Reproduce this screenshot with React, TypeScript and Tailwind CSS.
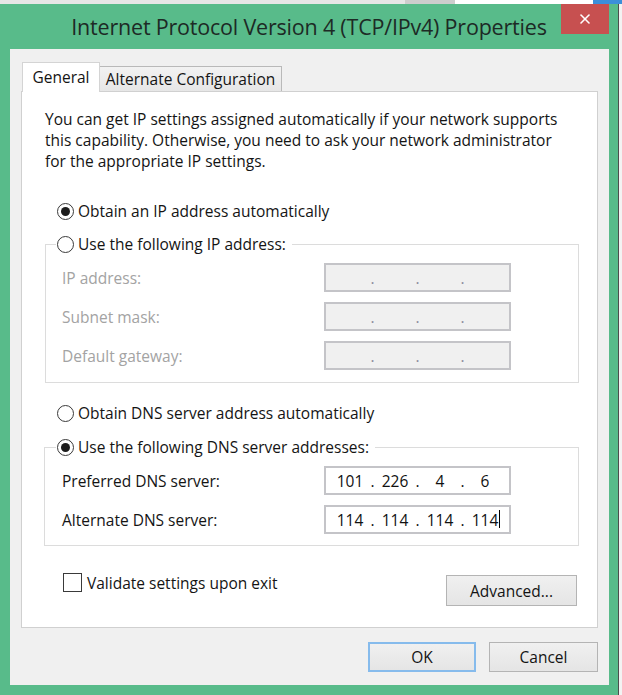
import { Fragment } from 'react'
import { X } from 'lucide-react'
import clsx from 'clsx'

function Radio({ checked }: { checked?: boolean }) {
  return (
    <span className="flex h-[17px] w-[17px] shrink-0 items-center justify-center rounded-full border border-[#3a3a3a] bg-white">
      {checked && <span className="h-[9px] w-[9px] rounded-full bg-[#1c1c1c]" />}
    </span>
  )
}

function IpField({
  parts,
  disabled,
  caret,
}: {
  parts: string[]
  disabled?: boolean
  caret?: boolean
}) {
  return (
    <div
      className={clsx(
        'flex h-[29px] w-[187px] items-center border-2 border-[#c4c4c8] pl-[6px]',
        disabled ? 'bg-[#f0f0f0] text-[#8c8c9c]' : 'bg-white text-[#111]'
      )}
    >
      {parts.map((p, i) => (
        <Fragment key={i}>
          {i > 0 && <span className="w-[9px] text-center">.</span>}
          <span className="flex w-[36px] justify-center">
            <span className="relative">
              {p}
              {caret && i === parts.length - 1 && (
                <span className="absolute -right-[2px] top-[1px] h-[18px] w-px bg-black" />
              )}
            </span>
          </span>
        </Fragment>
      ))}
    </div>
  )
}

function FieldRow({
  label,
  parts,
  disabled,
  caret,
}: {
  label: string
  parts: string[]
  disabled?: boolean
  caret?: boolean
}) {
  return (
    <div className="flex items-center">
      <span className={clsx('w-[262px]', disabled ? 'text-[#a3a3a3]' : 'text-[#141414]')}>
        {label}
      </span>
      <IpField parts={parts} disabled={disabled} caret={caret} />
    </div>
  )
}

function Button({ children, primary }: { children: string; primary?: boolean }) {
  return (
    <button
      className={clsx(
        'flex h-[30px] items-center justify-center bg-gradient-to-b from-[#f0f0f0] to-[#e5e5e5] text-[#141414]',
        primary ? 'w-[108px] border-2 border-[#86bbec]' : 'w-[109px] border border-[#b4b4b4]'
      )}
    >
      {children}
    </button>
  )
}

export default function App() {
  const empty = ['', '', '', '']

  return (
    <div className="flex h-[695px] w-[622px] flex-col overflow-hidden bg-[#f3f3f3] font-['Open_Sans',sans-serif] text-[15.5px] leading-[22px] text-[#141414]">
      {/* window behind the dialog */}
      <div className="flex h-[4px] shrink-0">
        <div className="w-[405px] bg-[#e6e6e6]" />
        <div className="w-[50px] bg-[#cdcdcd]" />
        <div className="w-[138px] bg-white" />
        <div className="flex-1 bg-[#3b8fd9]" />
      </div>

      <div className="flex flex-1">
        <div className="flex w-[618px] flex-col bg-[#58bb8a]">
          {/* caption */}
          <div className="relative flex h-[45px] shrink-0 items-center justify-center pt-[1px]">
            <span className="text-[21.5px] leading-[30px] tracking-[-0.2px] text-[#1d2a25]">
              Internet Protocol Version 4 (TCP/IPv4) Properties
            </span>
            <button className="absolute right-[9px] top-0 flex h-[30px] w-[48px] items-center justify-center bg-[#c75050] text-white">
              <X className="h-[16px] w-[16px]" strokeWidth={2.4} />
            </button>
          </div>

          {/* client area */}
          <div className="mx-[10px] mr-[9px] flex h-[636px] flex-col bg-[#f0f0f0]">
            <div className="flex items-end pl-[12px] pt-[13px]">
              <div className="relative z-10 -mb-px flex h-[30px] w-[78px] items-center justify-center border border-b-0 border-[#d4d4d4] bg-white pb-[2px]">
                General
              </div>
              <div className="flex h-[25px] w-[182px] items-center justify-center border border-l-0 border-b-0 border-[#b9b9b9] bg-gradient-to-b from-[#f2f2f2] to-[#e6e6e6]">
                Alternate Configuration
              </div>
            </div>

            <div className="ml-[11px] flex h-[537px] w-[577px] flex-col border border-[#d0d0d0] bg-white">
              <p className="pl-[23px] pt-[17px] leading-[21px]">
                You can get IP settings assigned automatically if your network supports
                <br />
                this capability. Otherwise, you need to ask your network administrator
                <br />
                for the appropriate IP settings.
              </p>

              <div className="ml-[35px] mt-[28px] flex h-[22px] items-center gap-[4px]">
                <Radio checked />
                <span>Obtain an IP address automatically</span>
              </div>

              <fieldset className="ml-[23px] mt-[11px] w-[534px] border border-[#dcdcdc] pb-[12px] pl-[16px]">
                <legend className="-ml-[6px] flex h-[22px] items-center gap-[4px] pl-[1px] pr-[6px]">
                  <Radio />
                  <span>Use the following IP address:</span>
                </legend>
                <div className="flex flex-col gap-[10px] pt-[8px]">
                  <FieldRow label="IP address:" parts={empty} disabled />
                  <FieldRow label="Subnet mask:" parts={empty} disabled />
                  <FieldRow label="Default gateway:" parts={empty} disabled />
                </div>
              </fieldset>

              <div className="ml-[35px] mt-[19px] flex h-[22px] items-center gap-[4px]">
                <Radio />
                <span>Obtain DNS server address automatically</span>
              </div>

              <fieldset className="ml-[22px] mt-[12px] w-[535px] border border-[#dcdcdc] pb-[11px] pl-[17px]">
                <legend className="-ml-[6px] flex h-[22px] items-center gap-[4px] pl-[1px] pr-[6px]">
                  <Radio checked />
                  <span>Use the following DNS server addresses:</span>
                </legend>
                <div className="flex flex-col gap-[10px] pt-[8px]">
                  <FieldRow label="Preferred DNS server:" parts={['101', '226', '4', '6']} />
                  <FieldRow
                    label="Alternate DNS server:"
                    parts={['114', '114', '114', '114']}
                    caret
                  />
                </div>
              </fieldset>

              <div className="mt-[27px] flex items-start justify-between pl-[41px] pr-[20px]">
                <label className="flex h-[19px] items-center gap-[5px]">
                  <span className="h-[19px] w-[19px] border border-[#3a3a3a] bg-white" />
                  <span>Validate settings upon exit</span>
                </label>
                <button className="mt-[2px] flex h-[31px] w-[131px] items-center justify-center border border-[#b4b4b4] bg-gradient-to-b from-[#f0f0f0] to-[#e5e5e5]">
                  Advanced...
                </button>
              </div>
            </div>

            <div className="mt-[14px] flex justify-end gap-[13px] pr-[11px]">
              <Button primary>OK</Button>
              <Button>Cancel</Button>
            </div>
          </div>
        </div>
        <div className="w-px bg-[#4d4d4d]" />
        <div className="flex-1 bg-[#f3f3f3]" />
      </div>
    </div>
  )
}
